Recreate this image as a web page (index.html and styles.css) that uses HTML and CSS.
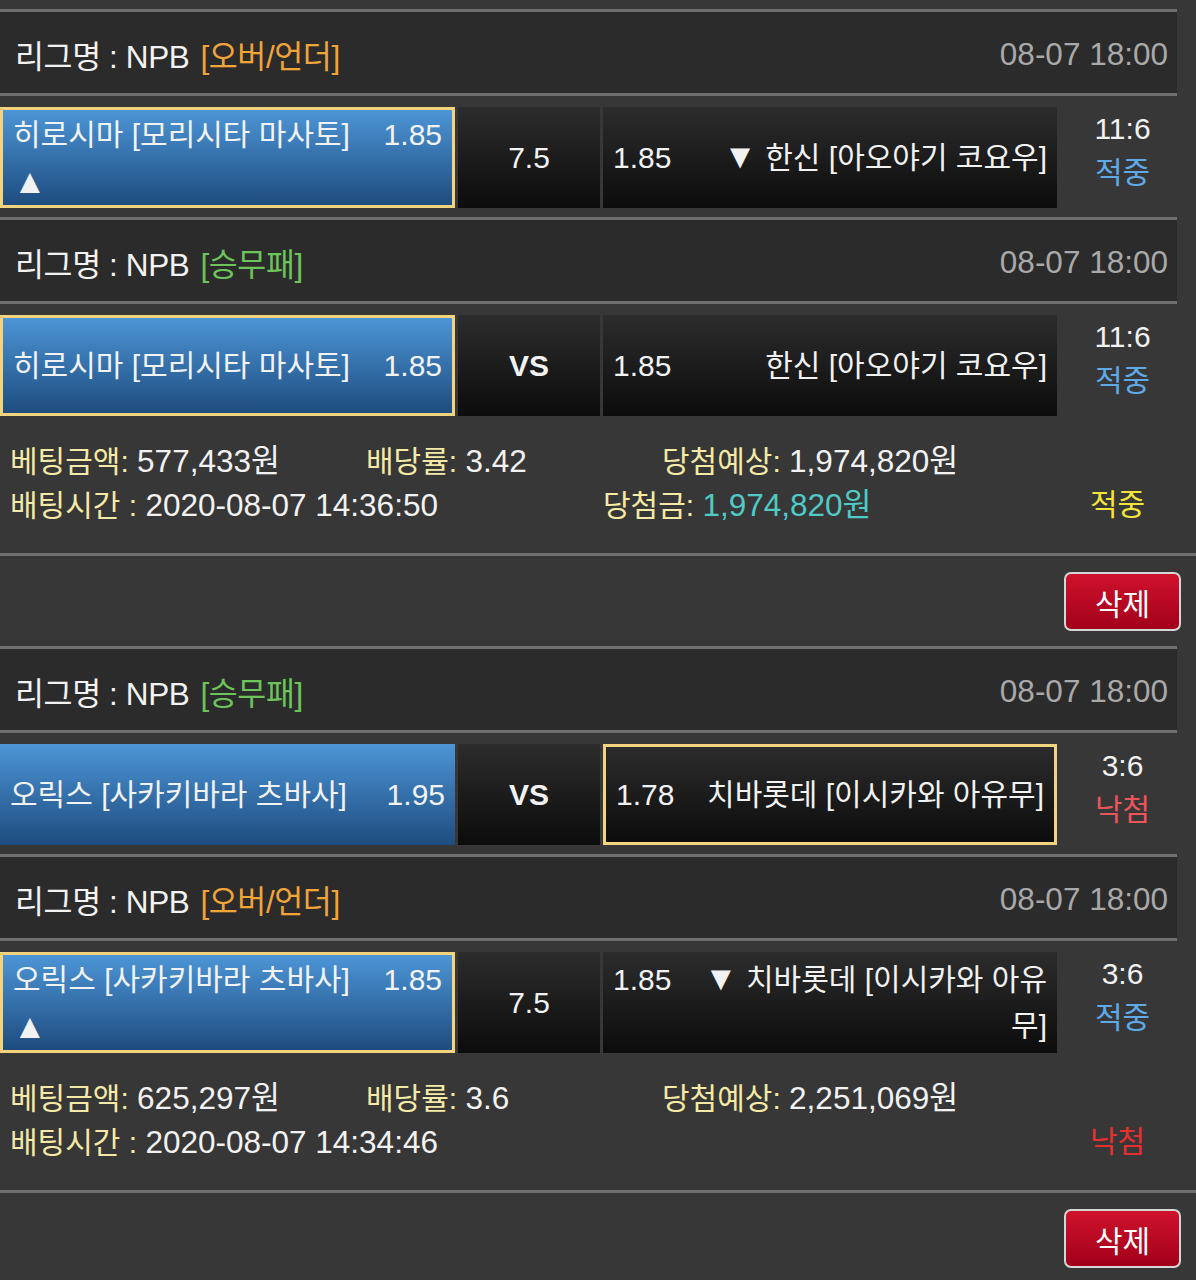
FILE: index.html
```html
<!DOCTYPE html>
<html lang="ko">
<head>
    <meta charset="UTF-8">
    <meta name="viewport" content="width=device-width, initial-scale=1.0">
    <title>배팅내역</title>
    <link rel="stylesheet" href="styles.css">
</head>
<body>
    <!-- 첫번째 배팅 -->
    <div class="bet">
        <div class="game">
            <div class="league">
                <span class="league-name">리그명 : NPB</span>
                <span class="market market-ou">[오버/언더]</span>
                <span class="date">08-07 18:00</span>
            </div>
            <div class="match">
                <div class="cell home picked">
                    <div class="home-line"><span class="team">히로시마 [모리시타 마사토]</span><span class="odds">1.85</span></div>
                    <div class="arrow">▲</div>
                </div>
                <div class="cell mid">7.5</div>
                <div class="cell away">
                    <div class="away-text"><span class="odds">1.85</span><span class="arrow-down">▼</span> 한신 [아오야기 코요우]</div>
                </div>
                <div class="score">
                    <div>11:6</div>
                    <div class="result-hit">적중</div>
                </div>
            </div>
        </div>
        <div class="game">
            <div class="league">
                <span class="league-name">리그명 : NPB</span>
                <span class="market market-wdl">[승무패]</span>
                <span class="date">08-07 18:00</span>
            </div>
            <div class="match">
                <div class="cell home picked">
                    <div class="home-line"><span class="team">히로시마 [모리시타 마사토]</span><span class="odds">1.85</span></div>
                </div>
                <div class="cell mid vs">VS</div>
                <div class="cell away">
                    <div class="away-text"><span class="odds">1.85</span>한신 [아오야기 코요우]</div>
                </div>
                <div class="score">
                    <div>11:6</div>
                    <div class="result-hit">적중</div>
                </div>
            </div>
        </div>
        <div class="summary">
            <div class="summary-row">
                <span class="col-amount"><span class="label">베팅금액:</span> <span class="value">577,433원</span></span>
                <span class="col-rate"><span class="label">배당률:</span> <span class="value">3.42</span></span>
                <span class="col-expect"><span class="label">당첨예상:</span> <span class="value">1,974,820원</span></span>
            </div>
            <div class="summary-row">
                <span class="col-time"><span class="label">배팅시간 :</span> <span class="value">2020-08-07 14:36:50</span></span>
                <span class="col-win"><span class="label">당첨금:</span> <span class="value win-money">1,974,820원</span></span>
                <span class="status status-hit">적중</span>
            </div>
        </div>
        <div class="actions">
            <button class="delete-button">삭제</button>
        </div>
    </div>

    <!-- 두번째 배팅 -->
    <div class="bet">
        <div class="game">
            <div class="league">
                <span class="league-name">리그명 : NPB</span>
                <span class="market market-wdl">[승무패]</span>
                <span class="date">08-07 18:00</span>
            </div>
            <div class="match">
                <div class="cell home">
                    <div class="home-line"><span class="team">오릭스 [사카키바라 츠바사]</span><span class="odds">1.95</span></div>
                </div>
                <div class="cell mid vs">VS</div>
                <div class="cell away picked">
                    <div class="away-text"><span class="odds">1.78</span>치바롯데 [이시카와 아유무]</div>
                </div>
                <div class="score">
                    <div>3:6</div>
                    <div class="result-miss">낙첨</div>
                </div>
            </div>
        </div>
        <div class="game">
            <div class="league">
                <span class="league-name">리그명 : NPB</span>
                <span class="market market-ou">[오버/언더]</span>
                <span class="date">08-07 18:00</span>
            </div>
            <div class="match">
                <div class="cell home picked">
                    <div class="home-line"><span class="team">오릭스 [사카키바라 츠바사]</span><span class="odds">1.85</span></div>
                    <div class="arrow">▲</div>
                </div>
                <div class="cell mid">7.5</div>
                <div class="cell away">
                    <div class="away-text"><span class="odds">1.85</span><span class="arrow-down">▼</span> 치바롯데 [이시카와 아유무]</div>
                </div>
                <div class="score">
                    <div>3:6</div>
                    <div class="result-hit">적중</div>
                </div>
            </div>
        </div>
        <div class="summary">
            <div class="summary-row">
                <span class="col-amount"><span class="label">베팅금액:</span> <span class="value">625,297원</span></span>
                <span class="col-rate"><span class="label">배당률:</span> <span class="value">3.6</span></span>
                <span class="col-expect"><span class="label">당첨예상:</span> <span class="value">2,251,069원</span></span>
            </div>
            <div class="summary-row">
                <span class="col-time"><span class="label">배팅시간 :</span> <span class="value">2020-08-07 14:34:46</span></span>
                <span class="col-win"></span>
                <span class="status status-miss">낙첨</span>
            </div>
        </div>
        <div class="actions">
            <button class="delete-button">삭제</button>
        </div>
    </div>
</body>
</html>
```

FILE: styles.css
```css
body {
    font-family: "Liberation Sans", "Noto Sans CJK KR", sans-serif;
    margin: 0;
    background-color: #373737;
    color: #f2f2f2;
    font-size: 30px;
}

.game {
    padding-top: 9px;
}

.league {
    box-sizing: border-box;
    display: flex;
    align-items: center;
    height: 87px;
    margin-right: 19px;
    padding: 3px 9px 0 15px;
    background-color: #2b2b2b;
    border-top: 3px solid #6f6f6f;
    border-bottom: 3px solid #6f6f6f;
    font-size: 31.5px;
}

.league-name,
.market {
    letter-spacing: -0.4px;
}

.market {
    margin-left: 11px;
}

.market-ou {
    color: #f0a43a;
}

.market-wdl {
    color: #6cc45a;
}

.date {
    margin-left: auto;
    color: #a9a9a9;
}

.match {
    display: flex;
    height: 101px;
    margin-top: 11px;
}

.cell {
    box-sizing: border-box;
    display: flex;
    flex-direction: column;
    justify-content: center;
    padding: 0 10px;
    background: linear-gradient(#2c2c2c, #0c0c0c);
}

.home {
    width: 455px;
    background: linear-gradient(#4c95d6, #1e4c7f);
    line-height: 47px;
}

.picked {
    border: 3px solid #f3d37e;
}

.home-line {
    display: flex;
    justify-content: space-between;
}

.arrow {
    font-size: 34px;
}

.mid {
    width: 142px;
    margin-left: 3px;
    align-items: center;
}

.vs {
    font-weight: bold;
}

.away {
    width: 454px;
    margin-left: 3px;
    line-height: 46px;
}

.away-text {
    text-align: right;
}

.away-text .odds {
    float: left;
    margin-right: 28px;
}

.arrow-down {
    font-size: 34px;
    line-height: 1;
}

.score {
    flex: 1;
    padding-right: 8px;
    text-align: center;
    line-height: 44px;
}

.result-hit {
    color: #5ea9e8;
}

.result-miss {
    color: #e8565c;
}

.summary {
    padding: 23px 0 26px 10px;
    border-bottom: 3px solid #6f6f6f;
    line-height: 44px;
}

.summary-row {
    display: flex;
    align-items: center;
    height: 44px;
}

.label {
    color: #f4eaa6;
}

.value {
    font-size: 31.5px;
}

.col-amount {
    width: 356px;
}

.col-rate {
    width: 296px;
}

.col-time {
    width: 593px;
}

.col-win {
    width: 487px;
}

.win-money {
    color: #4fcac6;
}

.status-hit {
    color: #f2e43a;
}

.status-miss {
    color: #e62f2f;
}

.actions {
    display: flex;
    justify-content: flex-end;
    padding: 16px 15px 6px;
}

.delete-button {
    width: 117px;
    height: 59px;
    border: 2px solid #d6d6d6;
    border-radius: 7px;
    background: linear-gradient(#cf122c, #a2001b);
    color: #fff;
    font-family: inherit;
    font-size: 30px;
    cursor: pointer;
}
```
